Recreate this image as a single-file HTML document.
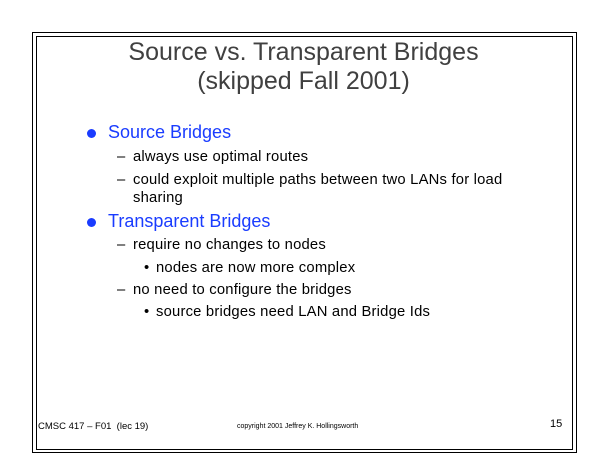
<!DOCTYPE html>
<html><head><style>
body{margin:0;width:605px;height:467px;background:#fff;position:relative;font-family:"Liberation Sans",sans-serif;overflow:hidden}
.o{position:absolute;left:32px;top:32px;width:543px;height:419px;border:1px solid #000}
.i{position:absolute;left:36px;top:36px;width:535px;height:412px;border:1px solid #000}
.t{position:absolute;left:36px;width:535px;text-align:center;font-size:25px;color:#404040}
.a{position:absolute;white-space:nowrap}
.b{font-size:18px;color:#1a3cff}
.s{font-size:14.8px;color:#000;letter-spacing:0.2px}
.dot{position:absolute;width:9px;height:9px;border-radius:50%;background:#1a3cff}
</style></head><body>
<div class="o"></div><div class="i"></div>
<div class="t" style="top:38px">Source vs. Transparent Bridges</div>
<div class="t" style="top:67px">(skipped Fall 2001)</div>
<div class="dot" style="left:87px;top:129px"></div>
<div class="a b" style="left:108px;top:122px">Source Bridges</div>
<div class="a s" style="left:117px;top:149px">–</div><div class="a s" style="left:133px;top:149px">always use optimal routes</div>
<div class="a s" style="left:117px;top:172px">–</div><div class="a s" style="left:133px;top:172px">could exploit multiple paths between two LANs for load</div>
<div class="a s" style="left:133px;top:190px">sharing</div>
<div class="dot" style="left:87px;top:218px"></div>
<div class="a b" style="left:108px;top:211px">Transparent Bridges</div>
<div class="a s" style="left:117px;top:237px">–</div><div class="a s" style="left:133px;top:237px">require no changes to nodes</div>
<div class="a s" style="left:144px;top:260px">•</div><div class="a s" style="left:156px;top:260px">nodes are now more complex</div>
<div class="a s" style="left:117px;top:282px">–</div><div class="a s" style="left:133px;top:282px">no need to configure the bridges</div>
<div class="a s" style="left:144px;top:304px">•</div><div class="a s" style="left:156px;top:304px">source bridges need LAN and Bridge Ids</div>
<div class="a" style="left:38px;top:421px;font-size:9.5px">CMSC 417 – F01&nbsp; (lec 19)</div>
<div class="a" style="left:237px;top:423px;font-size:7px">copyright 2001 Jeffrey K. Hollingsworth</div>
<div class="a" style="left:550px;top:418px;font-size:11px">15</div>
</body></html>
